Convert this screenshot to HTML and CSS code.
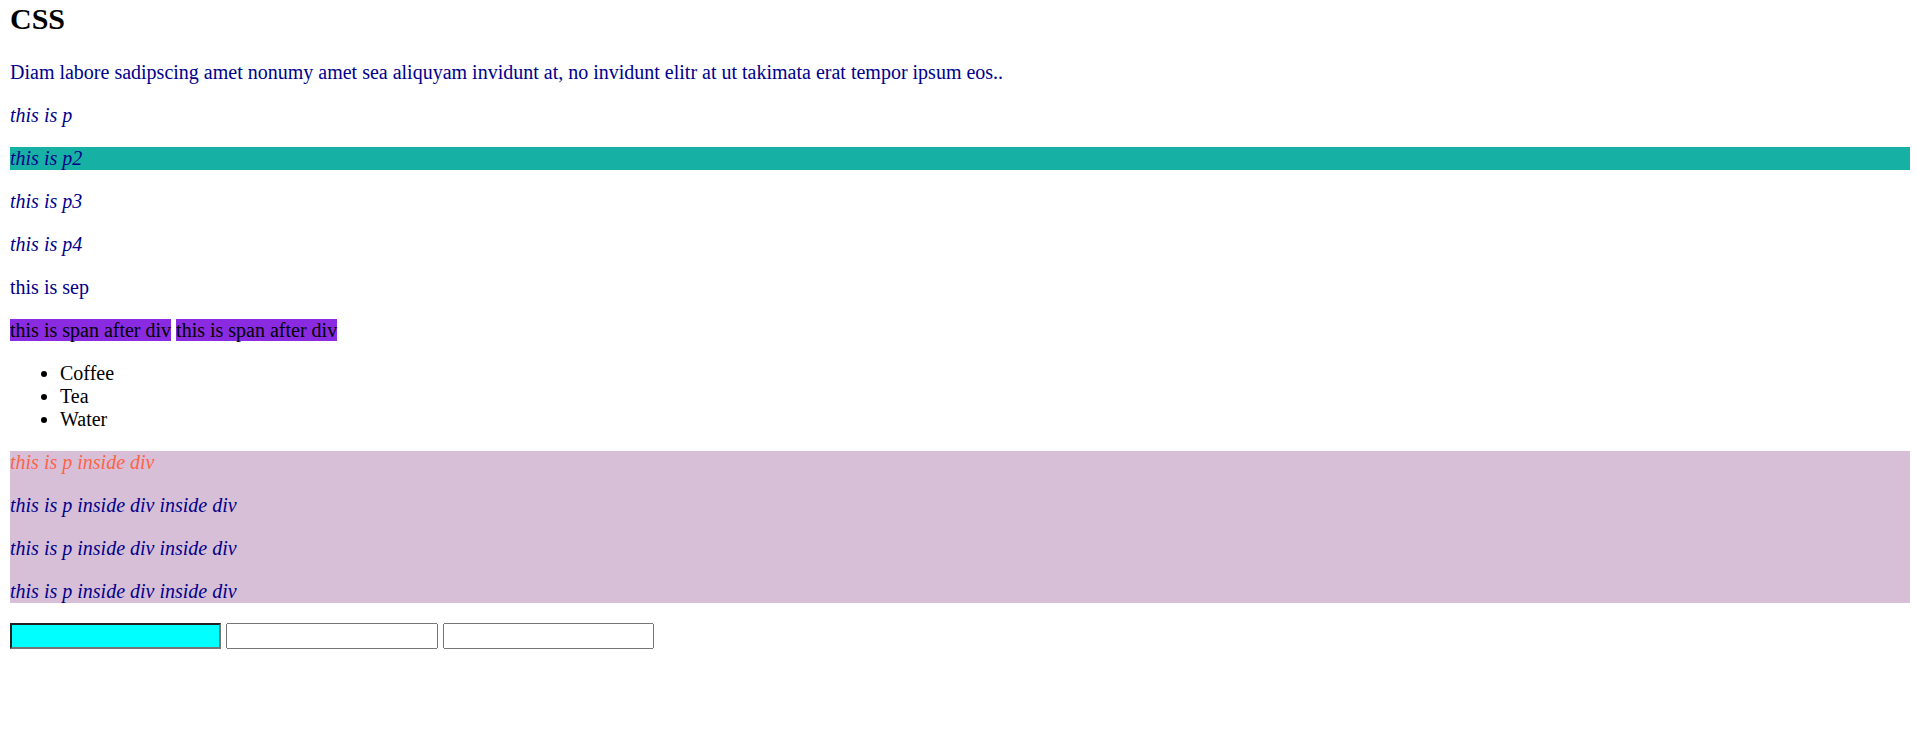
FILE: index.html
```html
<!DOCTYPE html>
<html>
<head>
<meta charset="utf-8">
<title>CSS</title>
<link rel="stylesheet" href="styles.css">
</head>
<body>
<h1 class="title">CSS</h1>
<p class="txt">Diam labore sadipscing amet nonumy amet sea aliquyam invidunt at, no invidunt elitr at ut takimata erat tempor ipsum eos..</p>
<p class="txt it">this is p</p>
<p class="txt it p2">this is p2</p>
<p class="txt it">this is p3</p>
<p class="txt it">this is p4</p>
<p class="txt">this is sep</p>
<div class="spans"><span class="tag">this is span after div</span> <span class="tag">this is span after div</span></div>
<ul class="list">
  <li>Coffee</li>
  <li>Tea</li>
  <li>Water</li>
</ul>
<div class="box">
  <p class="txt it tomato">this is p inside div</p>
  <div class="inner">
    <p class="txt it">this is p inside div inside div</p>
    <p class="txt it">this is p inside div inside div</p>
    <p class="txt it">this is p inside div inside div</p>
  </div>
</div>
<div class="inputs"><input class="field cyan" type="text"> <input class="field" type="text"> <input class="field" type="text"></div>
</body>
</html>
```
FILE: styles.css
```css
html {
  zoom: 1.25;
}
body {
  margin: 1.6px 6px 8px 8px;
  font-family: "Liberation Serif", "Times New Roman", serif;
  font-size: 16px;
  color: #000;
  background: #fff;
}
.title {
  font-size: 24px;
  font-weight: bold;
  margin: 0 0 20px 0;
}
.txt {
  color: #00008b;
  margin: 16px 0;
}
.it {
  font-style: italic;
}
.p2 {
  background: #17b0a4;
}
.spans {
  margin: 16px 0;
}
.tag {
  background: #8a2be2;
  color: #000;
}
.list {
  margin: 16px 0;
  padding-left: 40px;
}
.box {
  background: #d8bfd8;
}
.tomato {
  color: #ff6347;
}
.inputs {
  margin: 0;
  font-family: "Liberation Serif", "Times New Roman", serif;
  font-size: 16px;
}
.field {
  box-sizing: border-box;
  width: 169px;
  height: 21px;
  padding: 1px 2px;
  margin: 0;
  vertical-align: top;
}
.cyan {
  background: #00ffff;
}
```
